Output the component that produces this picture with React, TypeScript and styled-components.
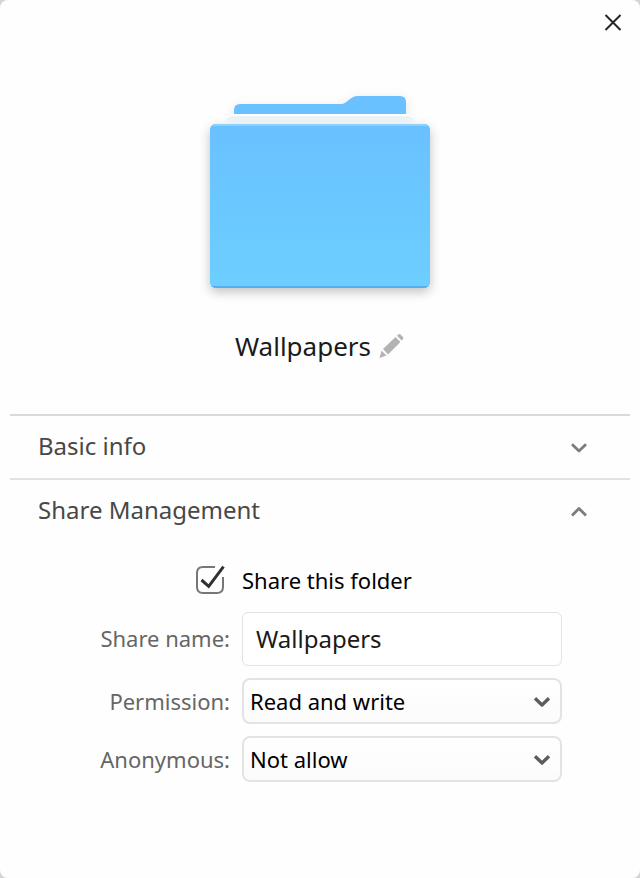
import React, { useState } from "react";
import styled, { createGlobalStyle } from "styled-components";

const GlobalStyle = createGlobalStyle`
  * { box-sizing: border-box; }
  body {
    margin: 0;
    background: #d4d4d4;
    font-family: "Noto Sans", "Open Sans", sans-serif;
  }
`;

const Dialog = styled.main`
  display: flex;
  flex-direction: column;
  width: 640px;
  height: 878px;
  overflow: hidden;
  background: #fefefe;
  border-radius: 8px;
`;

const TitleBar = styled.header`
  display: flex;
  justify-content: flex-end;
  height: 46px;
  padding: 12px 17px 0 0;
`;

const PlainButton = styled.button`
  display: flex;
  padding: 0;
  border: 0;
  background: none;
`;

const Summary = styled.section`
  display: flex;
  flex-direction: column;
  align-items: center;
  height: 368px;
  padding-top: 34px;
`;

const NameRow = styled.div`
  display: flex;
  align-items: center;
  gap: 7px;
  height: 36px;
  margin-top: 26px;
  padding-left: 1px;
`;

const FolderName = styled.h1`
  margin: 0;
  font-size: 26px;
  font-weight: 400;
  line-height: 36px;
  color: #1a1a1a;
`;

const Section = styled.section<{ $line: string }>`
  margin: 0 10px;
  border-top: 2px solid ${(p) => p.$line};
`;

const SectionHeader = styled.button`
  display: flex;
  align-items: center;
  justify-content: space-between;
  width: 100%;
  height: 62px;
  padding: 0 41px 0 28px;
  border: 0;
  background: none;
  font: 400 24px/34px "Noto Sans", sans-serif;
  color: #484848;
`;

const SectionTitle = styled.span`
  padding-bottom: 2px;
`;

const Form = styled.div`
  display: flex;
  flex-direction: column;
  padding: 20px 68px 0 0;
`;

const CheckRow = styled.label`
  display: flex;
  align-items: center;
  gap: 16px;
  height: 36px;
  margin: 0 0 14px 185px;
  font-size: 22px;
  line-height: 36px;
  color: #000;
`;

const Field = styled.div`
  display: grid;
  grid-template-columns: 220px 320px;
  column-gap: 12px;
  align-items: center;
  margin-bottom: 12px;
`;

const Label = styled.span<{ $lift?: boolean }>`
  padding-bottom: ${(p) => (p.$lift ? 2 : 0)}px;
  font-size: 22px;
  line-height: 30px;
  text-align: right;
  color: #666;
`;

const TextInput = styled.input`
  width: 320px;
  height: 54px;
  padding: 0 13px 2px;
  border: 1px solid #e2e2e2;
  border-radius: 6px;
  outline: 0;
  background: #fff;
  font: 400 24px "Noto Sans", sans-serif;
  color: #1a1a1a;
`;

const Dropdown = styled.button`
  display: flex;
  align-items: center;
  justify-content: space-between;
  width: 320px;
  height: 46px;
  padding: 0 8px 0 6px;
  border: 2px solid #e3e3e3;
  border-radius: 8px;
  background: linear-gradient(#fff, #fbfbfb);
  font: 400 22px/30px "Noto Sans", sans-serif;
  color: #000;
`;

function FolderIcon() {
  return (
    <svg width="260" height="222" viewBox="190 80 260 222">
      <defs>
        <linearGradient id="front" x1="0" y1="0" x2="0" y2="1">
          <stop offset="0" stopColor="#69c1ff" />
          <stop offset="1" stopColor="#6dceff" />
        </linearGradient>
        <linearGradient id="paper" x1="0" y1="0" x2="1" y2="0">
          <stop offset="0" stopColor="#f2f5f6" />
          <stop offset="0.06" stopColor="#ebf1f4" />
          <stop offset="0.94" stopColor="#ebf1f4" />
          <stop offset="1" stopColor="#f2f5f6" />
        </linearGradient>
        <filter id="shadow" x="-15%" y="-15%" width="130%" height="130%">
          <feDropShadow dx="0" dy="4" stdDeviation="5.5" floodColor="#000" floodOpacity="0.24" />
        </filter>
        <filter id="softShadow" x="-15%" y="-60%" width="130%" height="220%">
          <feDropShadow dx="0" dy="3" stdDeviation="6" floodColor="#000" floodOpacity="0.1" />
        </filter>
        <clipPath id="frontClip">
          <rect x="210" y="124" width="220" height="164" rx="6" />
        </clipPath>
      </defs>
      <path
        d="M234 126V110Q234 104 240 104H341C347 104 350 96 358 96H400Q406 96 406 102V126Z"
        fill="#69c1ff"
        filter="url(#softShadow)"
      />
      <rect x="210" y="124" width="220" height="164" rx="6" fill="url(#front)" filter="url(#shadow)" />
      <path d="M223 124Q225 114 232 114H408Q415 114 417 124Z" fill="#fff" />
      <path d="M223 124Q226 116 232 116H408Q414 116 417 124Z" fill="url(#paper)" />
      <g clipPath="url(#frontClip)">
        <rect x="210" y="124" width="220" height="164" fill="url(#front)" />
        <rect x="210" y="124" width="220" height="2" fill="#8fd0ff" />
        <rect x="210" y="286" width="220" height="2" fill="#55aef3" />
      </g>
    </svg>
  );
}

function CloseIcon() {
  return (
    <svg width="20" height="20" viewBox="0 0 20 20">
      <path d="M2.5 3 17.5 18M17.5 3 2.5 18" stroke="#252525" strokeWidth="2" />
    </svg>
  );
}

function PencilIcon() {
  return (
    <svg width="28" height="28" viewBox="0 0 28 28">
      <g fill="#b3b3b3">
        <path d="m3.5 18.5 5 5-7 2.5Z" />
        <path d="M5 17 17.5 5l5 5L10 22.5Z" />
        <path d="m19 3.7 1.4-1.3q1-.7 2 0l2.6 2.6q.8 1 0 2l-1.4 1.5Z" />
      </g>
    </svg>
  );
}

function Chevron({ up = false, dark = false }: { up?: boolean; dark?: boolean }) {
  return (
    <svg width="20" height="16" viewBox="0 0 20 16">
      <path
        d={up ? "M3 12.5 10 5.5 17 12.5" : "M3 5.2 10 12 17 5.2"}
        fill="none"
        stroke={dark ? "#5c5c5c" : "#7d7d7d"}
        strokeWidth={dark ? 3.3 : 2.8}
        strokeLinejoin="round"
      />
    </svg>
  );
}

function CheckBox({ checked }: { checked: boolean }) {
  return (
    <svg width="31" height="32" viewBox="0 0 31 32">
      <path
        d={
          checked
            ? "M20 3H8Q2 3 2 9V23Q2 29 8 29H22Q28 29 28 23V13"
            : "M8 3H22Q28 3 28 9V23Q28 29 22 29H8Q2 29 2 23V9Q2 3 8 3Z"
        }
        fill="none"
        stroke="#777"
        strokeWidth="2"
      />
      {checked && (
        <path d="m6.5 16 7.2 6.3L28.5 2.7" fill="none" stroke="#303030" strokeWidth="3" />
      )}
    </svg>
  );
}

export default function App() {
  const [shareOpen, setShareOpen] = useState(true);
  const [shared, setShared] = useState(true);
  const [shareName, setShareName] = useState("Wallpapers");

  return (
    <>
      <GlobalStyle />
      <Dialog>
        <TitleBar>
          <PlainButton aria-label="Close">
            <CloseIcon />
          </PlainButton>
        </TitleBar>
        <Summary>
          <FolderIcon />
          <NameRow>
            <FolderName>Wallpapers</FolderName>
            <PlainButton aria-label="Rename">
              <PencilIcon />
            </PlainButton>
          </NameRow>
        </Summary>
        <Section $line="#dadada">
          <SectionHeader>
            <SectionTitle>Basic info</SectionTitle>
            <Chevron />
          </SectionHeader>
        </Section>
        <Section $line="#e2e2e2">
          <SectionHeader onClick={() => setShareOpen(!shareOpen)}>
            <SectionTitle>Share Management</SectionTitle>
            <Chevron up={shareOpen} />
          </SectionHeader>
          {shareOpen && (
            <Form>
              <CheckRow onClick={() => setShared(!shared)}>
                <CheckBox checked={shared} />
                Share this folder
              </CheckRow>
              <Field>
                <Label $lift>Share name:</Label>
                <TextInput value={shareName} onChange={(e) => setShareName(e.target.value)} />
              </Field>
              <Field>
                <Label>Permission:</Label>
                <Dropdown>
                  Read and write
                  <Chevron dark />
                </Dropdown>
              </Field>
              <Field>
                <Label>Anonymous:</Label>
                <Dropdown>
                  Not allow
                  <Chevron dark />
                </Dropdown>
              </Field>
            </Form>
          )}
        </Section>
      </Dialog>
    </>
  );
}
